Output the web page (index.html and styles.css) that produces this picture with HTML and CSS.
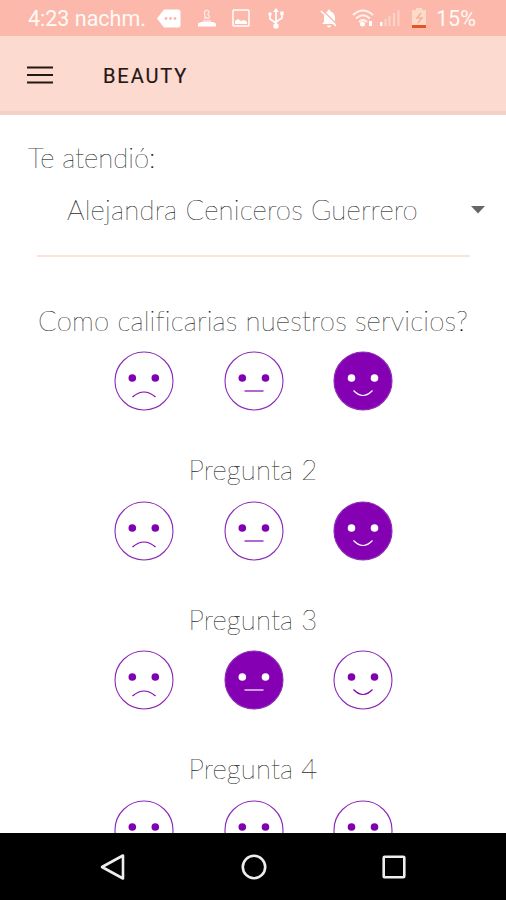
FILE: index.html
```html
<!DOCTYPE html>
<html lang="es">
<head>
<meta charset="utf-8">
<title>Beauty</title>
<link rel="stylesheet" href="styles.css">
</head>
<body>
<svg class="defs" width="0" height="0">
  <symbol id="sad" viewBox="0 0 60 60"><circle class="ring" cx="30" cy="30" r="29"/><circle class="eye" cx="18.3" cy="27" r="3.8"/><circle class="eye" cx="41.3" cy="27" r="3.8"/><path class="mouth" d="M18.500 46Q30 36 41.500 46"/></symbol>
  <symbol id="flat" viewBox="0 0 60 60"><circle class="ring" cx="30" cy="30" r="29"/><circle class="eye" cx="18.3" cy="27" r="3.8"/><circle class="eye" cx="41.500" cy="27" r="3.8"/><path class="mouth" d="M20.500 40H39.500"/></symbol>
  <symbol id="happy" viewBox="0 0 60 60"><circle class="ring" cx="30" cy="30" r="29"/><circle class="eye" cx="18.500" cy="27" r="3.8"/><circle class="eye" cx="41.500" cy="27" r="3.8"/><path class="mouth" d="M20.500 39.500Q30 49.500 39.500 39.500"/></symbol>
</svg>
<div class="screen">
  <header class="status">
    <span class="time">4:23 nachm.</span>
    <svg class="message" width="24" height="19" viewBox="0 0 24 19"><path fill="#fff" d="M7 .5H21Q23.500 .5 23.500 3V16Q23.500 18.500 21 18.500H7L0 9.500Z"/><g fill="#fbb8ab"><circle cx="9" cy="9.500" r="1.400"/><circle cx="13.500" cy="9.500" r="1.400"/><circle cx="18" cy="9.500" r="1.400"/></g></svg>
    <svg class="stamp" width="20" height="19" viewBox="0 0 20 19"><path fill="none" stroke="#fff" stroke-opacity=".65" stroke-width="1.400" d="M8 10L7.500 2.500Q10 0 12 2.500L11 5.500Q14 8 11 9.500L8 8M6 12H14"/><path fill="#fff" d="M4 13H16L19 14.500V17.500H1V14.500Z"/></svg>
    <svg class="image" width="18" height="18" viewBox="0 0 18 18"><rect x="1" y="1" width="16" height="16" rx="1" fill="none" stroke="#fff" stroke-width="1.500"/><path fill="#fff" d="M3 15V12L6 10L9 12L12 11L15 13V15Z"/></svg>
    <svg class="usb" width="16" height="21" viewBox="0 0 16 21"><path fill="none" stroke="#fff" stroke-width="1.700" d="M8 3V18M8 15L2 11V6M8 14L14 10V5"/><path fill="#fff" d="M8 0L11 4H5Z"/><circle cx="8" cy="18" r="2.700" fill="#fff"/><circle cx="2" cy="6" r="1.800" fill="#fff"/><path fill="#fff" d="M12.300 3.500H15.700V7H12.300Z"/></svg>
    <svg class="bell" width="18" height="19" viewBox="0 0 18 19"><path fill="#fff" d="M9 .5Q10.500 .5 10.500 2.500Q15 4 15 9V13L17 15H2L4 13V8Q4 4 7.500 2.500Q7.500 .5 9 .5M7 16.500H11Q11 18.500 9 18.500T7 16.500"/><path stroke="#fbb8ab" stroke-width="1.200" d="M2.500 1L17.500 16"/><path stroke="#fff" stroke-width="1.500" d="M1 2L16 17"/></svg>
    <svg class="wifi" width="22" height="18" viewBox="0 0 22 18"><g fill="none" stroke="#fff3ee" stroke-width="2"><path d="M1 6Q11-3 21 6M4 9.500Q11 3 18 9.500M7 13Q11 9 15 13"/></g><circle cx="10.500" cy="15" r="2.500" fill="#fff"/><path fill="#fff" d="M17 12H20V17H17Z"/></svg>
    <svg class="signal" width="20" height="18" viewBox="0 0 20 18"><path fill="#fff" d="M0 13H2.500V17H0Z"/><path fill="#fcd3c8" d="M4.500 10H6.500V17H4.500ZM8.500 7H10.500V17H8.500ZM13 4H15V17H13ZM17.500 1H19.500V17H17.500Z"/></svg>
    <svg class="battery" width="14" height="20" viewBox="0 0 14 20"><path fill="#fcdcc9" d="M4 0H10V2H13Q14 2 14 3V20H0V3Q0 2 1 2H4Z"/><path fill="none" stroke="#f9ae9e" stroke-width="1.500" d="M9 5L5 10H10L6 15"/><path fill="#e65327" d="M0 17H14V20H0Z"/></svg>
    <span class="percent">15%</span>
  </header>
  <nav class="appbar">
    <svg class="menu" width="26" height="18" viewBox="0 0 26 18"><path stroke="#251713" stroke-width="2.200" d="M0 1.500H26M0 9H26M0 16.500H26"/></svg>
    <h1 class="title">BEAUTY</h1>
  </nav>
  <main class="content">
    <p class="label">Te atendió:</p>
    <div class="select"><span class="name">Alejandra Ceniceros Guerrero</span><svg width="14" height="8" viewBox="0 0 14 8"><path fill="#666" d="M0 0H14L7 7.500Z"/></svg></div>
    <section class="question"><h2 class="ask">Como calificarias nuestros servicios?</h2><div class="faces"><svg class="face"><use href="#sad"/></svg><svg class="face"><use href="#flat"/></svg><svg class="face on"><use href="#happy"/></svg></div></section>
    <section class="question"><h2 class="ask">Pregunta 2</h2><div class="faces"><svg class="face"><use href="#sad"/></svg><svg class="face"><use href="#flat"/></svg><svg class="face on"><use href="#happy"/></svg></div></section>
    <section class="question"><h2 class="ask">Pregunta 3</h2><div class="faces"><svg class="face"><use href="#sad"/></svg><svg class="face on"><use href="#flat"/></svg><svg class="face"><use href="#happy"/></svg></div></section>
    <section class="question"><h2 class="ask">Pregunta 4</h2><div class="faces"><svg class="face"><use href="#sad"/></svg><svg class="face"><use href="#flat"/></svg><svg class="face"><use href="#happy"/></svg></div></section>
  </main>
  <footer class="navbar">
    <svg width="28" height="30" viewBox="0 0 28 30"><path class="key" d="M24 3.500V26.500L3 15Z"/></svg>
    <svg width="28" height="30" viewBox="0 0 28 30"><circle class="key" cx="14" cy="15" r="11.200"/></svg>
    <svg width="28" height="30" viewBox="0 0 28 30"><rect class="key" x="3.700" y="4.700" width="20.600" height="20.600" rx="1"/></svg>
  </footer>
</div>
</body>
</html>
```
FILE: styles.css
```css
* { box-sizing: border-box; }
body { margin: 0; background: #fff; }
h1, h2, p { margin: 0; font-size: inherit; font-weight: inherit; }
svg { display: block; flex: none; }
.defs { position: absolute; }
.screen { display: flex; flex-direction: column; width: 506px; height: 900px; overflow: hidden; }

.status { flex: none; display: flex; align-items: center; height: 36px; padding: 0 0 0 28px; background: #fbb8ab; color: #fffaf7; font: 400 21.5px/34px Roboto, sans-serif; white-space: nowrap; }
.time { width: 129px; padding-top: 2px; }
.stamp { margin-left: 16px; }
.image { margin-left: 15px; }
.usb { margin-left: 18px; }
.bell { margin-left: 36px; }
.wifi { margin-left: 14px; }
.signal { margin-left: 6px; }
.battery { margin-left: 12px; }
.percent { margin-left: 10px; padding-top: 2px; }

.appbar { flex: none; display: flex; align-items: center; height: 79px; padding-left: 27px; background: #fcdad0; border-bottom: 4px solid #f5d0c7; }
.menu { margin-top: 2px; }
.title { margin: 5px 0 0 50px; color: #251713; font: 400 20px/24px Roboto, sans-serif; letter-spacing: 1.9px; -webkit-text-stroke: 0.2px #251713; }

.content { flex: 1; min-height: 0; overflow: hidden; color: #000; font: 200 27.5px/36px Lato, sans-serif; letter-spacing: 0.2px; white-space: nowrap; -webkit-text-stroke: 0.2px #333; }
.label { padding: 25px 0 0 28px; height: 61px; letter-spacing: 0; }
.select { display: flex; align-items: center; justify-content: space-between; height: 81px; margin: 0 36px 0 37px; padding: 0 0 11px 30px; border-bottom: 2px solid #fce3da; letter-spacing: 0.25px; }
.select svg { margin-right: -15px; }
.question { height: 149.6px; }
.question:first-of-type { margin-top: 45.5px; }
.ask { text-align: center; }
.faces { display: flex; justify-content: center; gap: 49.6px; padding: 12.5px 0 0 1px; }
.face { width: 60px; height: 60px; --ink: #8100b0; --fill: none; }
.on { --ink: #fff; --fill: #8500b2; }
.ring { fill: var(--fill); stroke: #8b2bb6; stroke-width: 1.1; }
.eye { fill: var(--ink); }
.mouth { fill: none; stroke: var(--ink); stroke-width: 1.2; }

.navbar { flex: none; display: flex; align-items: center; justify-content: center; gap: 112.5px; height: 67px; padding-left: 1px; background: #000; }
.key { fill: none; stroke: #eee; stroke-width: 2.6; stroke-linejoin: round; }
```
